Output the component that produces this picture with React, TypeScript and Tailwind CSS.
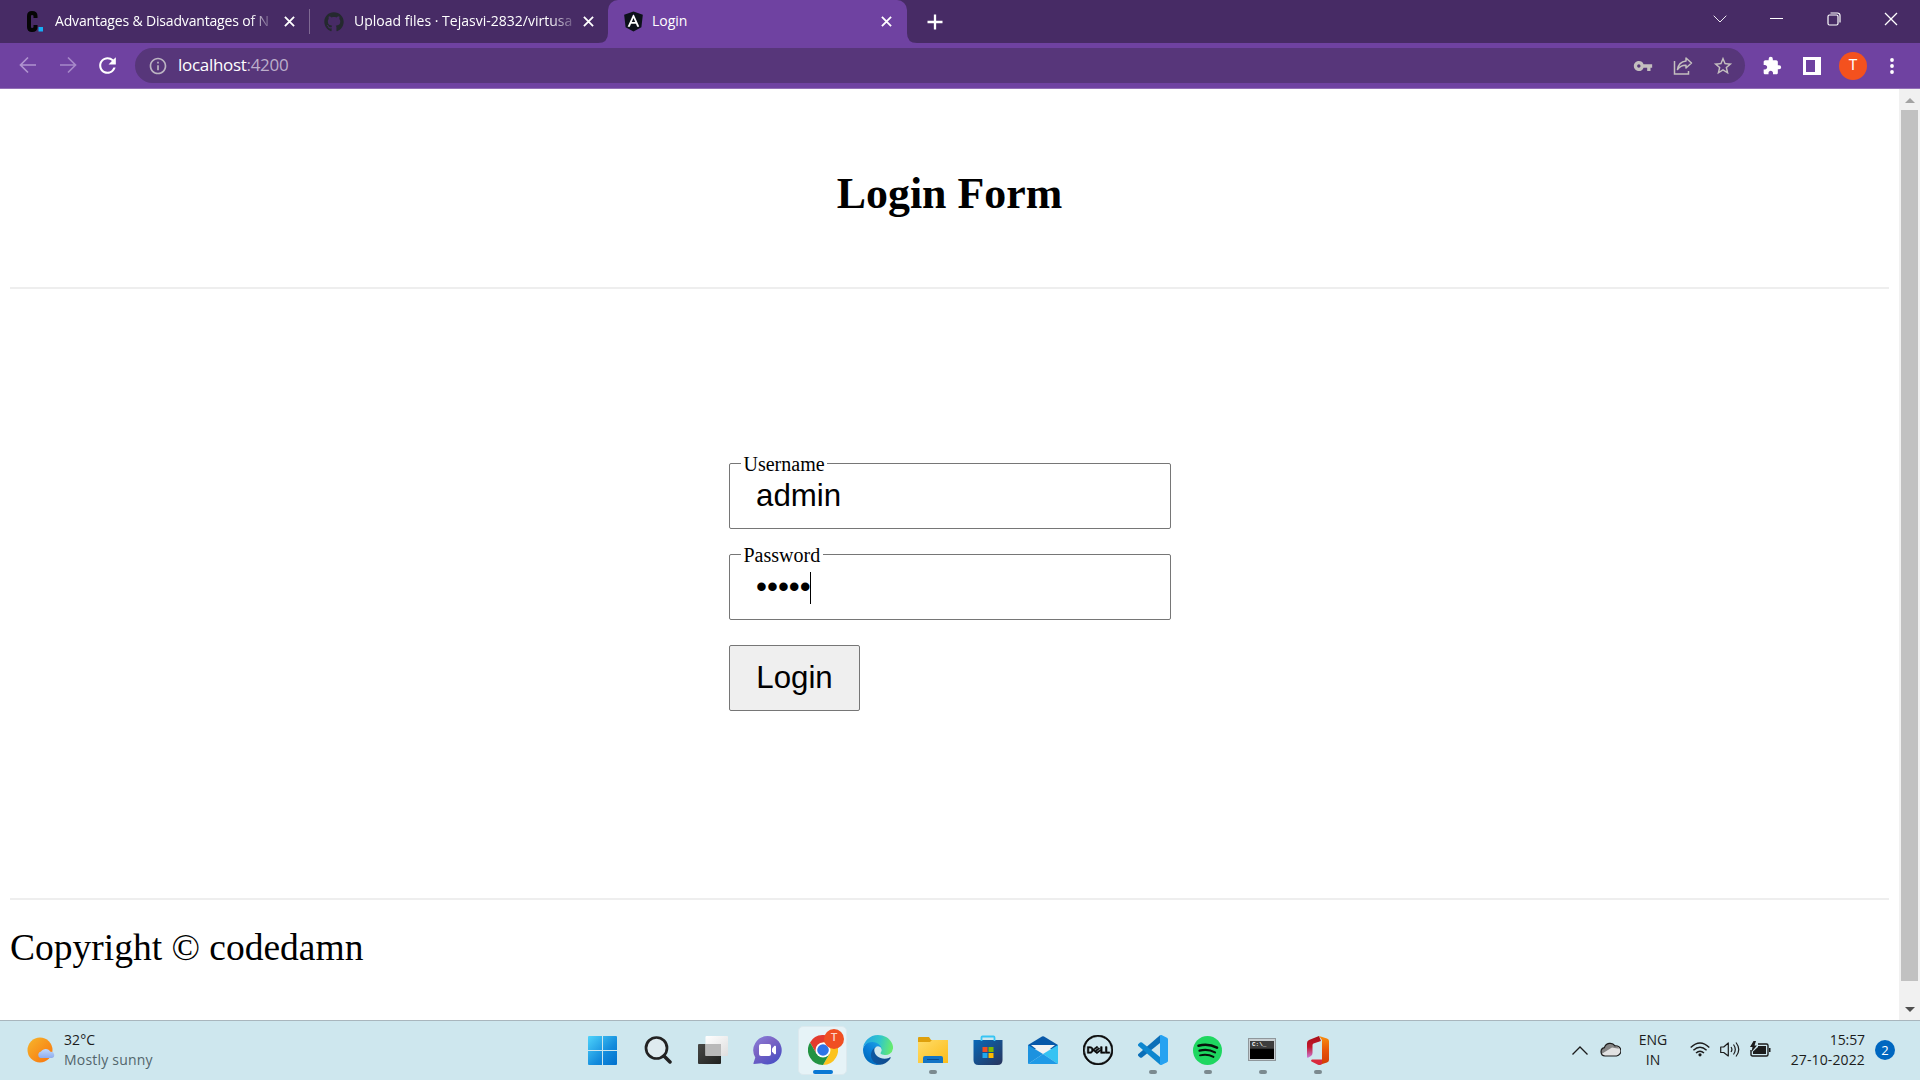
import type { ReactNode } from 'react';
import { FaAngular, FaGithub } from 'react-icons/fa';
import { SiDell } from 'react-icons/si';
import { MdRefresh, MdVpnKey, MdStarOutline, MdExtension, MdOutlineInfo } from 'react-icons/md';

const UI = "font-['Open_Sans','Noto_Sans',sans-serif]";

function CloseX() {
  return (
    <svg width="11" height="11" viewBox="0 0 12 12" className="shrink-0" stroke="#fff" strokeWidth="2">
      <path d="M1 1l10 10M11 1L1 11" />
    </svg>
  );
}

function TabStrip() {
  return (
    <div className="flex h-[43px] items-stretch bg-[#472b65] text-[14px] text-white">
      <div className="flex w-[309px] items-center pl-[26px]">
        <svg width="18" height="21" viewBox="0 0 18 21" className="shrink-0">
          <path d="M9.500 7V5Q9.500 2 6 2Q3 2 3 5v11q0 3 3 3q3.500 0 3.500-3v-2" fill="none" stroke="#050505" strokeWidth="4" />
          <rect x="12.500" y="16" width="4.500" height="4.500" fill="#16aef5" />
        </svg>
        <span className="mb-[2px] ml-[11px] w-[220px] overflow-hidden whitespace-nowrap tracking-[-0.17px] [mask-image:linear-gradient(to_right,#000_195px,transparent_220px)]">
          Advantages &amp; Disadvantages of N
        </span>
        <span className="ml-[9px] flex"><CloseX /></span>
      </div>
      <div className="flex w-[299px] items-center">
        <span className="h-[25px] w-px bg-[#7f6a93]" />
        <FaGithub size={20} color="#24292e" className="ml-[14px] shrink-0" />
        <span className="mb-[2px] ml-[10px] w-[220px] overflow-hidden whitespace-nowrap tracking-[0.01px] [mask-image:linear-gradient(to_right,#000_195px,transparent_225px)]">
          Upload files · Tejasvi-2832/virtusa
        </span>
        <span className="ml-[9px] flex"><CloseX /></span>
      </div>
      <div className="relative flex w-[299px] items-center rounded-t-[10px] bg-[#6f42a1] pl-[15px]">
        <svg width="10" height="10" className="absolute bottom-0 -left-[10px]"><path d="M10 0v10H0Q10 10 10 0z" fill="#6f42a1" /></svg>
        <svg width="10" height="10" className="absolute -right-[10px] bottom-0"><path d="M0 0v10h10Q0 10 0 0z" fill="#6f42a1" /></svg>
        <span className="relative flex h-[20px] w-[20px] shrink-0 items-center justify-center">
          <span className="absolute h-[13px] w-[12px] bg-white" />
          <FaAngular size={23} color="#0c1119" className="relative shrink-0" />
        </span>
        <span className="mb-[2px] ml-[9px] w-[220px]">Login</span>
        <span className="ml-[9px] flex"><CloseX /></span>
      </div>
      <div className="flex flex-1 items-center pl-[20px]">
        <svg width="16" height="16" viewBox="0 0 16 16" stroke="#fff" strokeWidth="2.300"><path d="M8 .5v15M.5 8h15" /></svg>
      </div>
      <div className="flex h-[37px] w-[209px] items-center">
        <svg width="14" height="8" viewBox="0 0 14 8" fill="none" stroke="#eee9f2" className="ml-[2px]"><path d="M.7.7L7 7 13.300.7" /></svg>
        <svg width="13" height="2" className="ml-[43px]"><path d="M0 .5h13" stroke="#fff" /></svg>
        <svg width="14" height="14" viewBox="0 0 14 14" fill="none" stroke="#fff" strokeWidth="1.200" className="ml-[44px]">
          <rect x="1" y="3" width="10" height="10" rx="1.500" />
          <path d="M3.500 1h7a2.500 2.500 0 0 1 2.500 2.500v7" />
        </svg>
        <svg width="14" height="14" viewBox="0 0 14 14" stroke="#fff" strokeWidth="1.300" className="ml-[43px]"><path d="M1 1l12 12M13 1L1 13" /></svg>
      </div>
    </div>
  );
}

function Toolbar() {
  return (
    <div className="flex h-[46px] items-start border-b border-[#9370b6] bg-[#6f42a1] pt-[5px]">
      <div className="flex h-[34px] w-[135px] items-center pl-[19px]">
        <svg width="18" height="18" viewBox="0 0 18 18" fill="none" stroke="#b094d0" strokeWidth="1.700"><path d="M17 9H2M9 1.500L1.500 9 9 16.500" /></svg>
        <svg width="18" height="18" viewBox="0 0 18 18" fill="none" stroke="#a789c9" strokeWidth="1.700" className="ml-[22px]"><path d="M1 9h15M9 1.500L16.500 9 9 16.500" /></svg>
        <MdRefresh size={25} color="#fff" className="ml-[18px]" />
      </div>
      <div className="flex h-[35px] w-[1610px] items-center rounded-full bg-[#57367a] pl-[12px]">
        <MdOutlineInfo size={20} color="#bcb4c2" className="ml-px" />
        <span className="mb-[1px] ml-[10px] flex-1 text-[17px] tracking-[-0.3px] text-white">localhost<span className="text-[#bcaecb]">:4200</span></span>
        <MdVpnKey size={20} color="#c4bfbf" />
        <svg width="20" height="18" viewBox="0 0 20 18" fill="none" stroke="#c4bfbf" strokeWidth="1.500" className="ml-[20px]">
          <path d="M1.500 4v13h14v-3" />
          <path d="M13 1l5.500 5L13 11V8.200Q7.500 8 4.500 12.500 5.500 5 13 4z" strokeLinejoin="round" />
        </svg>
        <MdStarOutline size={22} color="#c4bfbf" className="mr-[11px] ml-[19px]" />
      </div>
      <div className="flex h-[35px] items-center pl-[17px]">
        <MdExtension size={20} color="#fff" />
        <span className="ml-[21px] h-[18px] w-[18px] border-y-[3px] border-r-[6px] border-l-[3px] border-white" />
        <span className="ml-[18px] flex h-[28px] w-[28px] items-center justify-center rounded-full bg-[#f4511e] font-['Roboto'] text-[15px] text-white">T</span>
        <svg width="4" height="18" viewBox="0 0 4 18" fill="#fff" className="ml-[23px]"><circle cx="2" cy="3" r="1.900" /><circle cx="2" cy="9" r="1.900" /><circle cx="2" cy="15" r="1.900" /></svg>
      </div>
    </div>
  );
}

function Field({ label, children }: { label: string; children: ReactNode }) {
  return (
    <div className="relative flex h-[66px] w-[442px] rounded-[2px] border border-[#767676] pt-[14px] pl-[26px]">
      <span className="absolute -top-[11px] left-[11px] bg-white px-[2.500px] font-['Liberation_Serif',serif] text-[20px] leading-[23px]">{label}</span>
      <span className="flex h-[36px] items-center">{children}</span>
    </div>
  );
}

function Page() {
  return (
    <div className="flex h-[931px] bg-white text-black">
      <main className="flex flex-1 flex-col px-[10px] font-['Liberation_Serif',serif]">
        <h3 className="h-[198px] pt-[79px] text-center text-[43.875px] leading-[50px] font-bold">Login Form</h3>
        <div className="h-[2px] shrink-0 bg-[#eeeeee]" />
        <form className="mx-auto flex h-[609px] w-[441px] flex-col items-start gap-[25px] pt-[174px] font-['Liberation_Sans',sans-serif] text-[31.250px] leading-[36px]">
          <Field label="Username">admin</Field>
          <Field label="Password">
            <span className="-mt-[1px]">•••••</span>
            <span className="mt-[1px] -ml-[1px] h-[32px] w-px bg-black" />
          </Field>
          <button type="button" className="h-[66px] w-[131px] rounded-[2px] border border-[#767676] bg-[#efefef] text-center">Login</button>
        </form>
        <div className="h-[2px] shrink-0 bg-[#eeeeee]" />
        <p className="pt-[26px] text-[37.500px] leading-[43px]">Copyright © codedamn</p>
      </main>
      <div className="flex w-[21px] flex-col items-center bg-[#f1f1f1]">
        <svg width="10" height="21" className="shrink-0"><path d="M0 14l5-5 5 5z" fill="#a3a3a3" /></svg>
        <span className="h-[871px] w-[17px] bg-[#c1c1c1]" />
        <svg width="10" height="39" className="shrink-0"><path d="M0 26l5 5 5-5z" fill="#505050" /></svg>
      </div>
    </div>
  );
}

function Slot({ children, mark }: { children: ReactNode; mark?: boolean }) {
  return (
    <div className="relative flex w-[55px] items-center justify-center pb-px">
      {children}
      {mark && <span className="absolute bottom-[6px] h-[4px] w-[8px] rounded-full bg-[#7b8a8f]" />}
    </div>
  );
}

function WindowsLogo() {
  return (
    <svg width="29" height="29" viewBox="0 0 29 29">
      <defs><linearGradient id="win" x1="0" y1="0" x2="29" y2="29" gradientUnits="userSpaceOnUse"><stop stopColor="#4ed3fb" /><stop offset="0.600" stopColor="#138bdc" /><stop offset="1" stopColor="#0070cd" /></linearGradient></defs>
      <path d="M1 0h13v14H0V1a1 1 0 0 1 1-1zM15 0h13a1 1 0 0 1 1 1v13H15zM0 15h14v14H1a1 1 0 0 1-1-1zM15 15h14v13a1 1 0 0 1-1 1H15z" fill="url(#win)" />
    </svg>
  );
}

function SearchGlyph() {
  return (
    <svg width="28" height="28" viewBox="0 0 28 28" fill="none" stroke="#222222">
      <circle cx="12.500" cy="12" r="10.500" strokeWidth="2.700" fill="#dfebef" />
      <path d="M20 20l6 6" strokeWidth="3.500" strokeLinecap="round" />
    </svg>
  );
}

function TaskView() {
  return (
    <svg width="30" height="28" viewBox="0 0 30 28">
      <defs>
        <linearGradient id="tv1" x1="0" y1="0" x2="1" y2="1"><stop stopColor="#484846" /><stop offset="1" stopColor="#20211f" /></linearGradient>
        <linearGradient id="tv2" x1="0" y1="0" x2="1" y2="1"><stop stopColor="#fff" /><stop offset="1" stopColor="#dedede" /></linearGradient>
      </defs>
      <rect y="8" width="23" height="20" rx="1" fill="url(#tv1)" />
      <rect x="7.500" width="22.500" height="20" rx="1" fill="url(#tv2)" />
      <path d="M7.500 8H23v12H7.500z" fill="#b9b9b9" />
    </svg>
  );
}

function ChatLogo() {
  return (
    <svg width="29" height="29" viewBox="0 0 29 29">
      <defs><linearGradient id="chat" x1="0" y1="0" x2="0.700" y2="1"><stop stopColor="#8b83dc" /><stop offset="0.450" stopColor="#7a63c4" /><stop offset="1" stopColor="#4b50c4" /></linearGradient></defs>
      <path d="M14.500 0a14.250 14.250 0 1 1-6 27.200L1 28Q0 28 .5 27l1.800-5.500A14.250 14.250 0 0 1 14.500 0z" fill="url(#chat)" />
      <rect x="6" y="8" width="12" height="12" rx="2" fill="#fff" />
      <path d="M19 12.500l2.500-2.700q1.500-.6 1.500 1v6.400q0 1.600-1.500 1L19 15.500z" fill="#fff" />
    </svg>
  );
}

function ChromeLogo() {
  return (
    <svg width="30" height="30" viewBox="0 0 48 48">
      <path d="M24 12h20.800A24 24 0 0 0 3.200 12l10.400 18z" fill="#e33b2e" />
      <path d="M34.400 30L24 48A24 24 0 0 0 44.800 12H24z" fill="#fcc31e" />
      <path d="M13.600 30L3.200 12A24 24 0 0 0 24 48l10.400-18z" fill="#229342" />
      <circle cx="24" cy="24" r="12" fill="#fff" />
      <circle cx="24" cy="24" r="9.300" fill="#2f74e8" />
    </svg>
  );
}

function EdgeLogo() {
  return (
    <svg width="30" height="30" viewBox="0 0 256 256">
      <defs>
        <linearGradient id="e1" x1="58" y1="177" x2="231" y2="177" gradientUnits="userSpaceOnUse"><stop stopColor="#0c59a4" /><stop offset="1" stopColor="#114a8b" /></linearGradient>
        <linearGradient id="e2" x1="150" y1="90" x2="40" y2="220" gradientUnits="userSpaceOnUse"><stop stopColor="#1b9de2" /><stop offset="0.500" stopColor="#0a80da" /><stop offset="1" stopColor="#006cbe" /></linearGradient>
        <linearGradient id="e3" x1="20" y1="60" x2="245" y2="110" gradientUnits="userSpaceOnUse"><stop stopColor="#25a9e2" /><stop offset="0.500" stopColor="#30c6cc" /><stop offset="1" stopColor="#66eb6e" /></linearGradient>
      </defs>
      <path d="M231 190.500a93.700 93.700 0 0 1-10.500 4.700 101.900 101.900 0 0 1-35.900 6.500c-47.300 0-88.500-32.500-88.500-74.300a31.500 31.500 0 0 1 16.400-27.300c-42.800 1.800-53.800 46.400-53.800 72.500 0 73.900 68.100 81.400 82.800 81.400 7.900 0 19.800-2.300 27-4.600l1.300-.4a128.300 128.300 0 0 0 66.600-52.800 4 4 0 0 0-5.400-5.700z" fill="url(#e1)" />
      <path d="M105.700 241.400a79.200 79.200 0 0 1-22.700-21.300 80.700 80.700 0 0 1 29.500-120c3.200-1.500 8.500-4.100 15.600-4a32.400 32.400 0 0 1 25.700 13 31.900 31.900 0 0 1 6.300 18.700c0-.2 24.500-79.600-80-79.600-43.900 0-80 41.600-80 78.200a130.200 130.200 0 0 0 12.100 56 128 128 0 0 0 156.400 67 75.500 75.500 0 0 1-62.800-8z" fill="url(#e2)" />
      <path d="M152.300 148.900c-.8 1-3.300 2.500-3.300 5.700 0 2.600 1.700 5.200 4.800 7.300 14.400 10.100 41.700 8.700 41.800 8.700a59.600 59.600 0 0 0 30.300-8.300 61.400 61.400 0 0 0 30.400-52.900c.3-22.400-8-37.300-11.300-43.900C223.800 23.900 177.700 0 127.600 0a128 128 0 0 0-128 126.200c.5-36.500 36.800-66 80-66 3.500 0 23.500.3 42 10 16.300 8.600 24.900 18.900 30.800 29.200 6.200 10.700 7.300 24.100 7.300 29.500s-2.700 13.300-7.400 20z" fill="url(#e3)" />
    </svg>
  );
}

function FolderLogo() {
  return (
    <svg width="30" height="28" viewBox="0 0 30 28">
      <defs><linearGradient id="fol" x1="0" y1="0" x2="1" y2="1"><stop stopColor="#ffdc69" /><stop offset="1" stopColor="#fcbc19" /></linearGradient></defs>
      <path d="M0 2Q0 1 1 1h10l2 3h16q1 0 1 1v9H0z" fill="#dfa00c" />
      <path d="M0 6h12l2-2h16v23H0z" fill="url(#fol)" />
      <path d="M5 27v-5q0-2 2-2h16q2 0 2 2v5z" fill="#1374c5" />
      <path d="M9 23.500h12" stroke="#094b8e" />
    </svg>
  );
}

function StoreLogo() {
  return (
    <svg width="30" height="30" viewBox="0 0 30 30">
      <defs><linearGradient id="sto" x1="0" y1="0" x2="1" y2="1"><stop stopColor="#0869b9" /><stop offset="1" stopColor="#28345c" /></linearGradient></defs>
      <path d="M.5 5h29v20q0 5-5 5h-19q-5 0-5-5z" fill="url(#sto)" />
      <path d="M8.500 6V2.500q0-1 1-1h11q1 0 1 1V6" fill="none" stroke="#36c5f4" strokeWidth="1.800" />
      <path d="M9.500 12h5v5h-5z" fill="#f25022" /><path d="M15.500 12h5v5h-5z" fill="#7fba00" />
      <path d="M9.500 18h5v5h-5z" fill="#20a8ee" /><path d="M15.500 18h5v5h-5z" fill="#ffb900" />
    </svg>
  );
}

function MailLogo() {
  return (
    <svg width="30" height="28" viewBox="0 0 30 28">
      <path d="M0 9L14 .5q1-.6 2 0L30 9v4H0z" fill="#0858a8" />
      <path d="M3 9h24L15 18.500z" fill="#f3f3f3" />
      <path d="M0 9l15 9L0 28z" fill="#1c92df" />
      <path d="M30 9v19L15 18z" fill="#35c3f3" />
      <path d="M15 18L0 28h30z" fill="#1f9ae6" />
    </svg>
  );
}

function VsCodeLogo() {
  return (
    <svg width="30" height="30" viewBox="0 0 30 30">
      <path d="M22 .3L22 8 4 22.500q-1 .5-2 0L.4 21q-1-1 0-2z" fill="#0b6fb8" />
      <path d="M22 29.700V22L4 7.500q-1-.5-2 0L.4 9q-1 1 0 2z" fill="#0e87cf" />
      <path d="M22 .3q.7-.5 1.500-.2l5.500 2.600q1 .5 1 1.600v21.400q0 1.100-1 1.600l-5.500 2.600q-.8.3-1.500-.2z" fill="#27a2f1" />
    </svg>
  );
}

function SpotifyLogo() {
  return (
    <svg width="29" height="29" viewBox="0 0 29 29" fill="none" stroke="#07130b" strokeLinecap="round">
      <circle cx="14.500" cy="14.500" r="14.500" fill="#1ed760" stroke="none" />
      <path d="M5.500 9.700q10-2.500 18.500 2" strokeWidth="2.600" />
      <path d="M6.500 14.600q8.500-2.200 15.500 1.800" strokeWidth="2.200" />
      <path d="M7 19.300q7.500-1.800 13.500 1.600" strokeWidth="1.900" />
    </svg>
  );
}

function TerminalLogo() {
  return (
    <span className="mr-px mb-px flex h-[23px] w-[28px] flex-col border border-[#8f979b] bg-[#c9cfd2] px-px pt-[2px] pb-px">
      <span className="flex-1 bg-gradient-to-b from-[#3d3d3d] from-40% to-black to-50% pt-px pl-[2px] font-['Liberation_Mono',monospace] text-[6px] leading-[6px] font-bold text-white">C:\_</span>
    </span>
  );
}

function OfficeLogo() {
  return (
    <svg width="24" height="29" viewBox="0 0 24 29">
      <defs>
        <linearGradient id="of1" x1="0" y1="0" x2="0" y2="1"><stop stopColor="#a80f17" /><stop offset="0.500" stopColor="#c4182c" /><stop offset="1" stopColor="#c97bd8" /></linearGradient>
        <linearGradient id="of2" x1="0" y1="0" x2="0" y2="1"><stop stopColor="#f9900f" /><stop offset="0.500" stopColor="#e85409" /><stop offset="1" stopColor="#d13a05" /></linearGradient>
      </defs>
      <path d="M13 0L3 4Q1 5 1 7v14q0 1 1 .8l3-1.800q1.500-1 1.500-3V9q0-1 1-1.500L15 5z" fill="url(#of1)" />
      <path d="M13 0l8 2.500q2 .7 2 2.500v19q0 1.800-2 2.500L13 29l3-4V4z" fill="url(#of2)" />
      <path d="M6 23.500h10V28q-2 1.500-4 .7L5.500 25.500q-1-1.200.5-2z" fill="#d92a3d" />
    </svg>
  );
}

function Tray() {
  return (
    <div className="flex w-[349px] items-center pl-[1px] text-[14px] leading-[20px] text-[#1c1c1c]">
      <svg width="16" height="9" viewBox="0 0 16 9" fill="none" stroke="#1c1c1c" strokeWidth="1.300"><path d="M.5 8.500L8 1l7.500 7.500" /></svg>
      <svg width="21" height="15" viewBox="0 0 21 15" className="mb-[2px] ml-[12px]">
        <path d="M5 14a4.200 4.200 0 0 1-.6-8.300A6 6 0 0 1 15 3.800a5 5 0 0 1 1.500 10.200z" fill="#e2e2e2" />
        <path d="M1.500 12A4.200 4.200 0 0 1 4.400 5.700 6 6 0 0 1 15 3.800q3 .5 4 3L12 5.500z" fill="#858585" />
        <path d="M5 14a4.200 4.200 0 0 1-.6-8.300A6 6 0 0 1 15 3.800a5 5 0 0 1 1.500 10.200z" fill="none" stroke="#1c1c1c" strokeWidth="1.200" />
      </svg>
      <span className="mb-[2px] ml-[15px] flex w-[34px] flex-col items-center"><span>ENG</span><span>IN</span></span>
      <svg width="20" height="15" viewBox="0 0 20 15" fill="none" stroke="#1c1c1c" strokeWidth="1.400" className="mb-[2px] ml-[20px]">
        <path d="M.7 5.500q9.300-9 18.600 0M3.400 8.300q6.600-6.300 13.200 0M6 11q4-3.700 8 0" /><circle cx="10" cy="12.800" r="1.600" fill="#1c1c1c" stroke="none" />
      </svg>
      <svg width="20" height="17" viewBox="0 0 20 17" fill="none" stroke="#1c1c1c" strokeWidth="1.200" className="mb-[2px] ml-[10px]">
        <path d="M.7 6h3L8.300 2v13L3.700 11.500h-3z" strokeLinejoin="round" /><path d="M11 6q1.800 2.500 0 5M13.500 3.500q3.600 5 0 10M16 1.500q5.500 7 0 14" />
      </svg>
      <svg width="21" height="17" viewBox="0 0 21 17" className="mb-[2px] ml-[10px]">
        <path d="M8 3h8.500q1.500 0 1.500 1.500v9q0 1.500-1.500 1.500H2.500Q1 15 1 13.500V9" fill="none" stroke="#1c1c1c" strokeWidth="1.400" />
        <path d="M8 5h8v8H3v-2.500L8 6z" fill="#1c1c1c" /><path d="M19 7h1.500v4H19zM3.500 0L0 6h2.500L1.500 11 7 4.500H4.500L6 0z" fill="#1c1c1c" />
      </svg>
      <span className="mb-[2px] flex w-[94px] flex-col items-end"><span className="tracking-[-0.1px]">15:57</span><span className="tracking-[0.12px]">27-10-2022</span></span>
      <span className="mb-px ml-[10px] flex h-[20px] w-[20px] items-center justify-center rounded-full bg-[#0067c0] text-[13px] text-white">2</span>
    </div>
  );
}

function Taskbar() {
  return (
    <div className="flex h-[60px] border-t border-[#a9b6bd] bg-[#cee7ee]">
      <div className="flex w-[575px] items-center pb-px pl-[27px]">
        <svg width="28" height="27" viewBox="0 0 28 27">
          <defs>
            <linearGradient id="sun" x1="0" y1="0" x2="1" y2="1"><stop stopColor="#f6b62c" /><stop offset="1" stopColor="#f9720c" /></linearGradient>
            <linearGradient id="cl" x1="0" y1="0" x2="0" y2="1"><stop stopColor="#c0d8fb" /><stop offset="1" stopColor="#8fadee" /></linearGradient>
          </defs>
          <circle cx="13" cy="13" r="12.500" fill="url(#sun)" />
          <path d="M13.500 21a3.300 3.300 0 0 1 .5-6.400 5.500 5.500 0 0 1 9.500.2A3.200 3.200 0 0 1 25 21z" fill="url(#cl)" />
        </svg>
        <div className="mb-px ml-[9px] flex flex-col text-[14px] leading-[20px]">
          <span className="tracking-[0.1px] text-[#1c1c1c]">32°C</span>
          <span className="tracking-[0.2px] text-[#52656b]">Mostly sunny</span>
        </div>
      </div>
      <div className="flex w-[770px]">
        <Slot><WindowsLogo /></Slot>
        <Slot><SearchGlyph /></Slot>
        <Slot><TaskView /></Slot>
        <Slot><ChatLogo /></Slot>
        <Slot>
          <span className="relative flex h-[49px] w-[49px] items-center justify-center rounded-[5px] border border-[#dce9ee] bg-[#e6f3f7]">
            <ChromeLogo />
            <span className="absolute top-[2px] right-[2px] flex h-[20px] w-[20px] items-center justify-center rounded-full bg-[#f04f22] font-['Roboto'] text-[11px] font-medium text-[#fbd3c6]">T</span>
            <span className="absolute bottom-0 h-[4px] w-[20px] rounded-full bg-[#0a78d4]" />
          </span>
        </Slot>
        <Slot><EdgeLogo /></Slot>
        <Slot mark><FolderLogo /></Slot>
        <Slot><StoreLogo /></Slot>
        <Slot><MailLogo /></Slot>
        <Slot><SiDell size={30} color="#080808" stroke="#080808" strokeWidth={0.5} /></Slot>
        <Slot mark><VsCodeLogo /></Slot>
        <Slot mark><SpotifyLogo /></Slot>
        <Slot mark><TerminalLogo /></Slot>
        <Slot mark><OfficeLogo /></Slot>
      </div>
      <div className="flex flex-1 justify-end"><Tray /></div>
    </div>
  );
}

export default function App() {
  return (
    <div className={`flex h-[1080px] w-[1920px] flex-col overflow-hidden ${UI}`}>
      <TabStrip />
      <Toolbar />
      <Page />
      <Taskbar />
    </div>
  );
}
